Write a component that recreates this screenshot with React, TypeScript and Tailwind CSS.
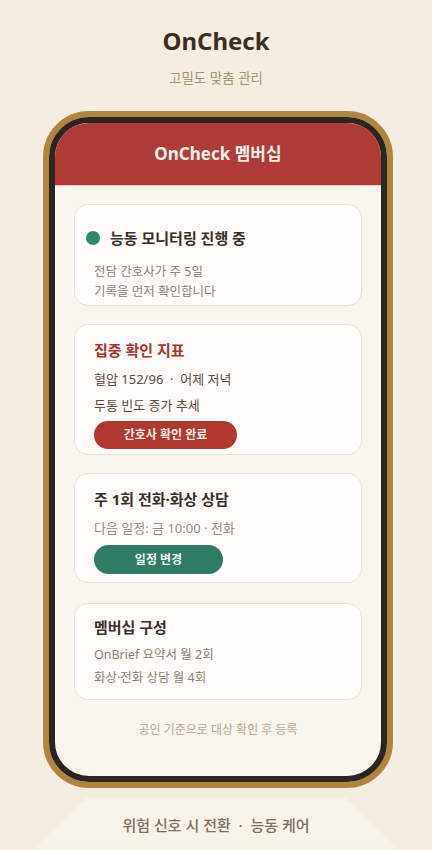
const font = { fontFamily: '"Noto Sans", "Noto Sans CJK KR", sans-serif' };

function Card({
  children,
  className = "",
}: {
  children: React.ReactNode;
  className?: string;
}) {
  return (
    <div
      className={`rounded-[14px] border border-[#f1dcd5] bg-[#fffdfb] px-[19px] ${className}`}
    >
      {children}
    </div>
  );
}

export default function App() {
  return (
    <div
      className="flex min-h-[850px] w-full flex-col items-center overflow-hidden bg-[#f4eee2]"
      style={font}
    >
      <h1 className="mt-[25px] text-[24px] font-bold leading-[32px] text-[#3b2d25]">
        OnCheck
      </h1>
      <p className="mt-[11px] text-[13.5px] leading-[20px] text-[#a39273]">
        고밀도 맞춤 관리
      </p>

      {/* phone frame */}
      <div className="ml-[4px] mt-[23px] w-[350px] rounded-[46px] border-[6px] border-[#b0863f]">
        <div className="h-[665px] overflow-hidden rounded-[40px] border-[6px] border-[#2d2520] bg-[#f9f5ef]">
          <div className="flex h-[63px] items-center justify-center border-b border-[#e9c9c4] bg-[#b03a35]">
            <span className="text-[17px] font-bold text-[#fbf3ee]">
              OnCheck 멤버십
            </span>
          </div>

          <div className="flex flex-col px-[19px] pt-[18px]">
            <Card className="pb-[3px] pt-[22px]">
              <div className="-ml-[8px] flex items-center gap-[10px]">
                <span className="h-[14px] w-[14px] rounded-full bg-[#2e8a68]" />
                <span className="text-[15px] font-bold leading-[22px] text-[#3a2e28]">
                  능동 모니터링 진행 중
                </span>
              </div>
              <p className="mt-[13px] text-[12.5px] leading-[20px] text-[#8c7f72]">
                전담 간호사가 주 5일
                <br />
                기록을 먼저 확인합니다
              </p>
            </Card>

            <Card className="mt-[18px] border-[#efcbc6] bg-[#fcefed] pb-[5px] pt-[14px]">
              <h2 className="text-[15px] font-bold leading-[22px] text-[#b0302c]">
                집중 확인 지표
              </h2>
              <p className="mt-[5px] text-[13px] leading-[26px] text-[#5b4b42]">
                혈압 152/96 &nbsp;·&nbsp; 어제 저녁
                <br />
                두통 빈도 증가 추세
              </p>
              <button className="mt-[3px] flex h-[28px] w-[143px] items-center justify-center rounded-full bg-[#b0382f] text-[12px] font-bold text-[#fbeeea]">
                간호사 확인 완료
              </button>
            </Card>

            <Card className="mt-[18px] pb-[8px] pt-[14px]">
              <h2 className="text-[15px] font-bold leading-[22px] text-[#3a2e28]">
                주 1회 전화·화상 상담
              </h2>
              <p className="mt-[5px] text-[13px] leading-[26px] text-[#9a8c80]">
                다음 일정: 금 10:00 · 전화
              </p>
              <button className="mt-[4px] flex h-[29px] w-[129px] items-center justify-center rounded-full bg-[#2e7b66] text-[12px] font-bold text-[#eef7f2]">
                일정 변경
              </button>
            </Card>

            <Card className="mt-[20px] pb-[10px] pt-[12px]">
              <h2 className="text-[15px] font-bold leading-[22px] text-[#3a2e28]">
                멤버십 구성
              </h2>
              <p className="mt-[5px] text-[12.5px] leading-[23px] text-[#8c7f72]">
                OnBrief 요약서 월 2회
                <br />
                화상·전화 상담 월 4회
              </p>
            </Card>

            <p className="mt-[21px] text-center text-[12px] leading-[18px] text-[#b6a791]">
              공인 기준으로 대상 확인 후 등록
            </p>
          </div>
        </div>
      </div>

      {/* footer glow */}
      <div className="relative mt-[9px] flex h-[56px] w-full items-center justify-center">
        <div className="absolute inset-0 bg-gradient-to-b from-[#f9f5ee] to-[#f7f2e9] blur-[4px] [clip-path:polygon(20%_0,80%_0,93%_100%,7%_100%)]" />
        <span className="relative text-[15px] font-medium text-[#7c6e60]">
          위험 신호 시 전환 &nbsp;·&nbsp; 능동 케어
        </span>
      </div>
    </div>
  );
}
